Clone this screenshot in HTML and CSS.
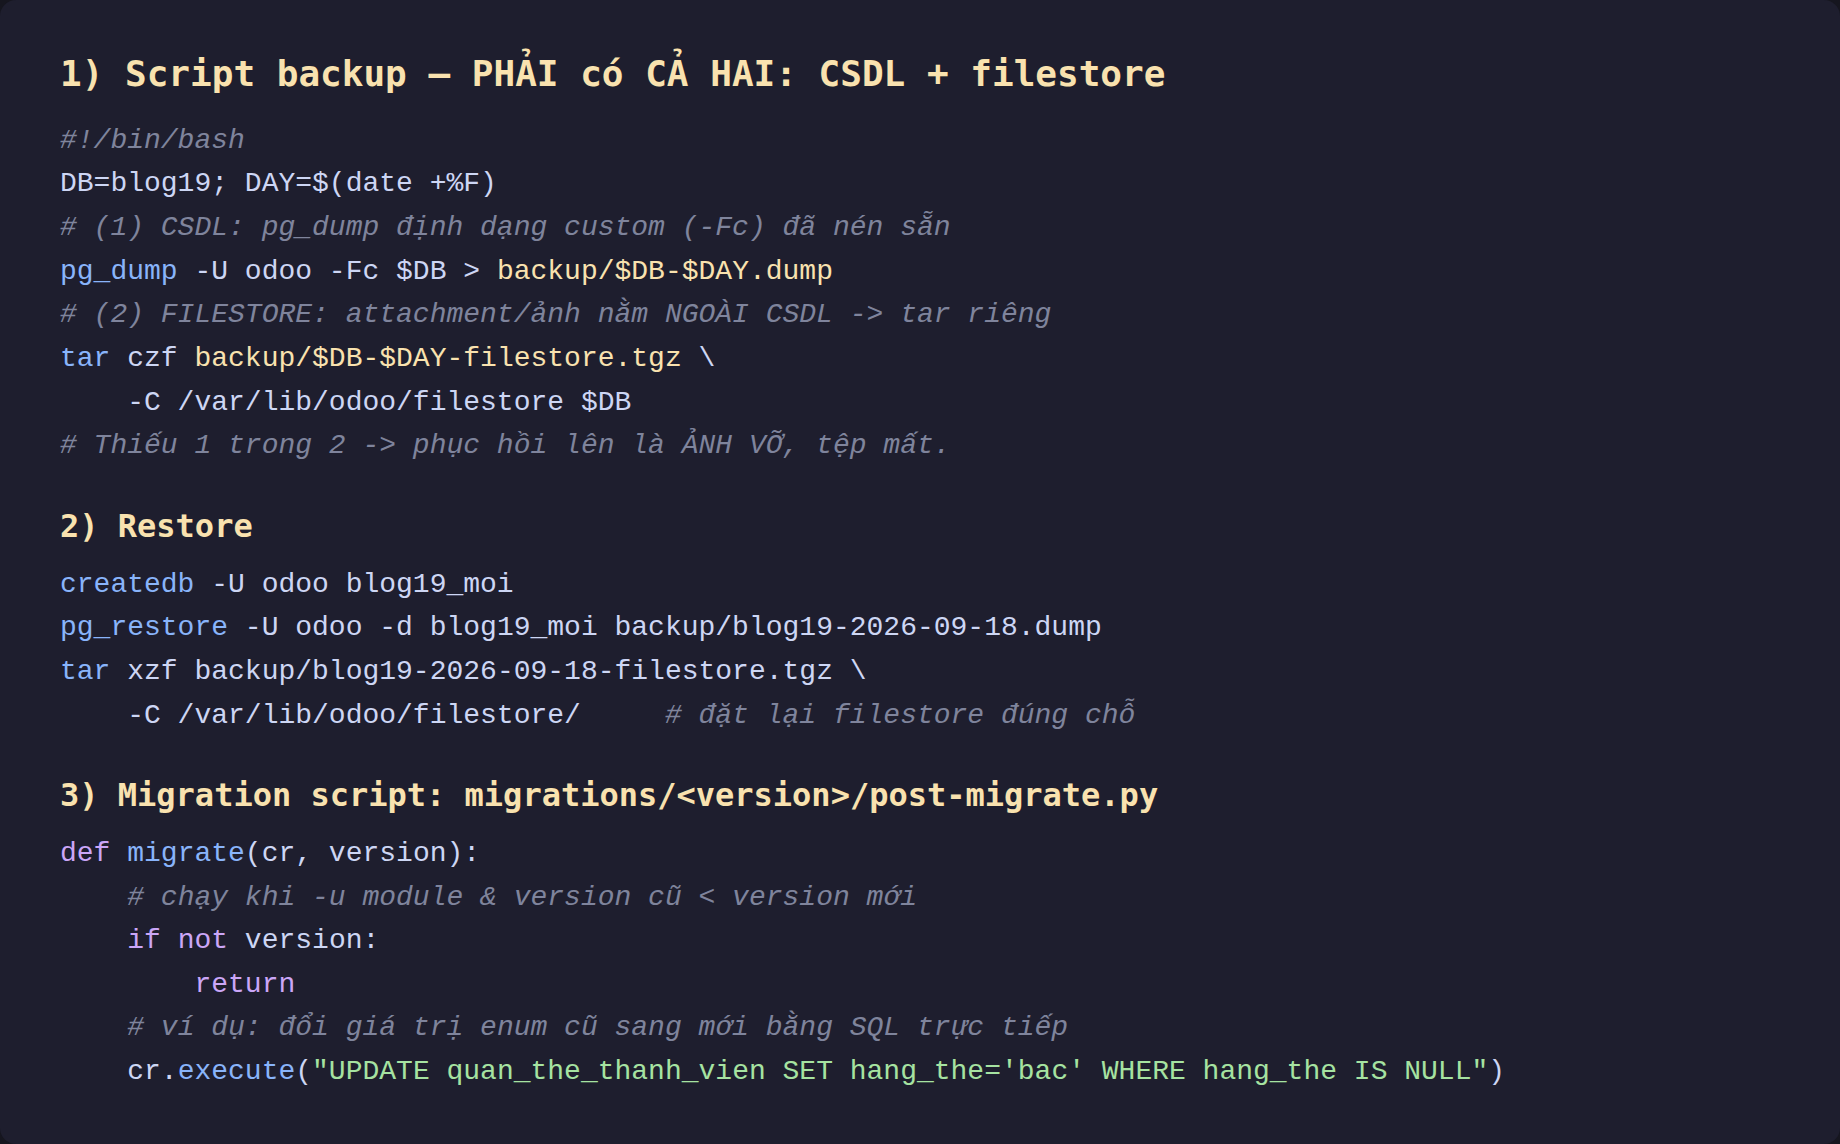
FILE: index.html
```html
<!DOCTYPE html>
<html lang="vi">
<head>
<meta charset="utf-8">
<title>Backup &amp; Restore</title>
<link rel="stylesheet" href="styles.css">
</head>
<body>
<main class="card">
<h1 class="title title-main">1) Script backup — PHẢI có CẢ HAI: CSDL + filestore</h1>
<pre class="code"><span class="c">#!/bin/bash</span>
DB=blog19; DAY=$(date +%F)
<span class="c"># (1) CSDL: pg_dump định dạng custom (-Fc) đã nén sẵn</span>
<span class="f">pg_dump</span> -U odoo -Fc $DB &gt; <span class="s">backup/$DB-$DAY.dump</span>
<span class="c"># (2) FILESTORE: attachment/ảnh nằm NGOÀI CSDL -&gt; tar riêng</span>
<span class="f">tar</span> czf <span class="s">backup/$DB-$DAY-filestore.tgz</span> \
    -C /var/lib/odoo/filestore $DB
<span class="c"># Thiếu 1 trong 2 -&gt; phục hồi lên là ẢNH VỠ, tệp mất.</span></pre>
<h2 class="title title-sub">2) Restore</h2>
<pre class="code"><span class="f">createdb</span> -U odoo blog19_moi
<span class="f">pg_restore</span> -U odoo -d blog19_moi backup/blog19-2026-09-18.dump
<span class="f">tar</span> xzf backup/blog19-2026-09-18-filestore.tgz \
    -C /var/lib/odoo/filestore/     <span class="c"># đặt lại filestore đúng chỗ</span></pre>
<h2 class="title title-sub">3) Migration script: migrations/&lt;version&gt;/post-migrate.py</h2>
<pre class="code"><span class="k">def</span> <span class="f">migrate</span>(cr, version):
    <span class="c"># chạy khi -u module &amp; version cũ &lt; version mới</span>
    <span class="k">if</span> <span class="k">not</span> version:
        <span class="k">return</span>
    <span class="c"># ví dụ: đổi giá trị enum cũ sang mới bằng SQL trực tiếp</span>
    cr.<span class="f">execute</span>(<span class="g">"UPDATE quan_the_thanh_vien SET hang_the='bac' WHERE hang_the IS NULL"</span>)</pre>
</main>
</body>
</html>
```

FILE: styles.css
```css
html, body {
  margin: 0;
  padding: 0;
  background: #16161f;
}

.card {
  box-sizing: border-box;
  width: 1840px;
  height: 1144px;
  background: #1e1e2e;
  border-radius: 16px;
  padding: 51px 60px 0 60px;
  overflow: hidden;
}

.title {
  font-family: "DejaVu Sans Mono", monospace;
  font-weight: bold;
  color: #f9e2af;
  line-height: 1.3;
  margin: 0;
  white-space: pre;
}

.title-main {
  font-size: 36px;
  margin: 0 0 21px 0;
}

.title-sub {
  font-size: 32px;
  margin: 38px 0 15px 0;
}

.code {
  margin: 0;
  font-family: "Liberation Mono", "Courier New", monospace;
  font-size: 28px;
  line-height: 43.65px;
  color: #cdd6f4;
  white-space: pre;
}

.c {
  color: #7f849c;
  font-style: italic;
}

.f {
  color: #89b4fa;
}

.s {
  color: #f9e2af;
}

.k {
  color: #cba6f7;
}

.g {
  color: #a6e3a1;
}
```
